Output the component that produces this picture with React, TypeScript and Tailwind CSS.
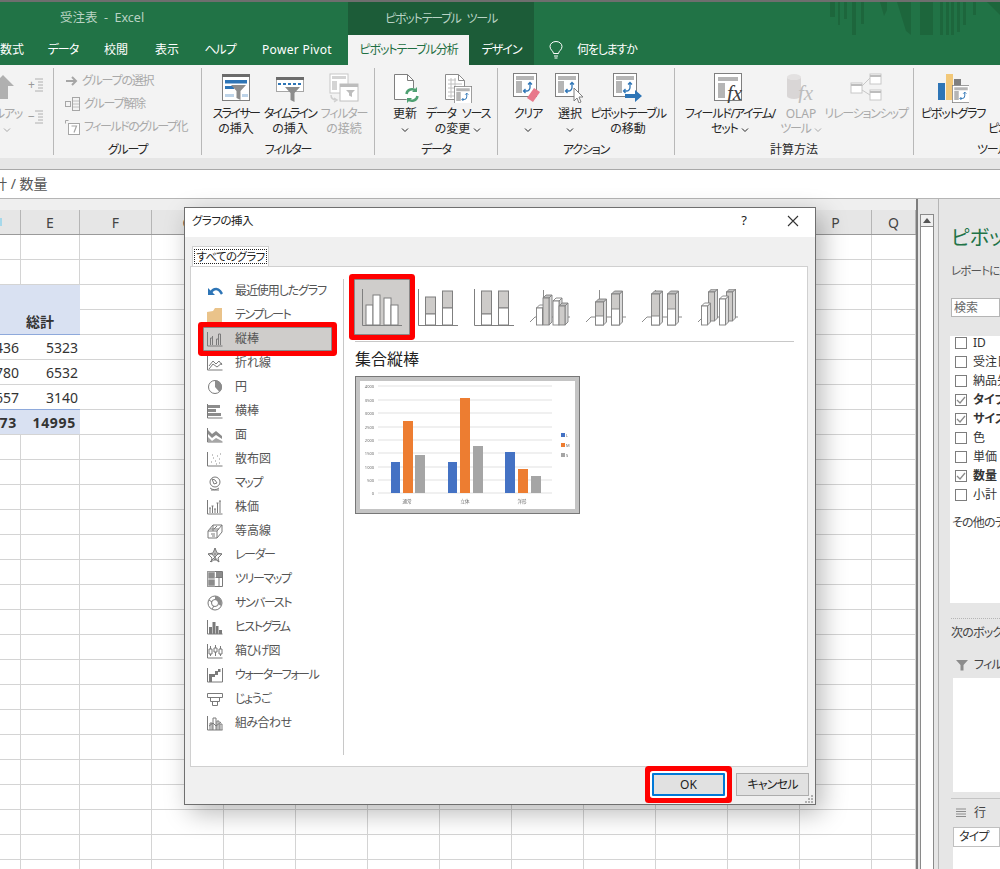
import type { ReactNode } from 'react';

const tabs = [
  { label: '数式', width: 'w-[37px] pl-0 text-left' },
  { label: 'データ', width: 'w-[52px] text-center tracking-[-1px]' },
  { label: '校閲', width: 'w-[54px] text-center' },
  { label: '表示', width: 'w-[48px] text-center' },
  { label: 'ヘルプ', width: 'w-[58px] text-center tracking-[-1px]' },
  { label: 'Power Pivot', width: 'w-[96px] text-center tracking-[0.3px]' },
];

const columns = ['', 'E', 'F', 'G', 'H', 'I', 'J', 'K', 'L', 'M', 'N', 'O', 'P', 'Q'];

function K({ children }: { children: ReactNode }) {
  return <span className="tracking-[-1.2px] [word-spacing:4px]">{children}</span>;
}

function PivotBase({ x = 0, y = 0, dim = false }: { x?: number; y?: number; dim?: boolean }) {
  const blue = dim ? '#b9b9b9' : '#2e75b6';
  return (
    <g transform={`translate(${x} ${y})`}>
      <rect x="0.5" y="0.5" width="23" height="23" fill="#fff" stroke={dim ? '#c4c4c4' : '#7f7f7f'} />
      <rect x="3" y="3" width="18" height="4" fill={dim ? '#d4d4d4' : '#b5b5b5'} />
      <rect x="3" y="8" width="6" height="12" fill={dim ? '#d4d4d4' : '#b5b5b5'} />
      <path d="M11 18h2.5a3.5 3.5 0 0 0 3.5-3.5V10M15 11.5l2-2 2 2M12.5 16l-2 2 2 2" fill="none" stroke={blue} strokeWidth="1.3" />
    </g>
  );
}

function SlicerIcon() {
  return (
    <svg width="30" height="30" viewBox="0 0 30 30">
      <rect x="1.5" y="1.5" width="27" height="26" fill="#fff" stroke="#7f7f7f" />
      <rect x="1" y="1" width="28" height="3" fill="#6b6b6b" />
      <rect x="4" y="7" width="22" height="3.5" fill="#2e75b6" />
      <rect x="4" y="13" width="9" height="3" fill="#2e75b6" />
      <rect x="4" y="21" width="9" height="3" fill="#bdd3e8" />
      <rect x="21" y="21" width="6" height="3" fill="#bdd3e8" />
      <path d="M10 12h15l-5.5 6v9l-4-2v-7z" fill="#8c8c8c" />
    </svg>
  );
}

function TimelineIcon() {
  return (
    <svg width="30" height="30" viewBox="0 0 30 30">
      <rect x="1.5" y="4.5" width="27" height="14" fill="#fff" stroke="#a6a6a6" />
      <rect x="1" y="4" width="28" height="3" fill="#6b6b6b" />
      <path d="M3 11h3M8 11h3M13 11h3M18 11h3M23 11h3" stroke="#2e75b6" strokeWidth="2" />
      <path d="M10 14h15l-5.5 6v9l-4-2v-7z" fill="#8c8c8c" />
    </svg>
  );
}

function FilterConnectIcon() {
  return (
    <svg width="30" height="30" viewBox="0 0 30 30">
      <rect x="1" y="1" width="18" height="19" fill="#fff" stroke="#c8c8c8" />
      <rect x="3" y="3" width="14" height="3" fill="#d4d4d4" />
      <rect x="3" y="8" width="5" height="9" fill="#d4d4d4" />
      <rect x="11" y="11" width="18" height="17" fill="#fff" stroke="#c0c0c0" />
      <rect x="11" y="11" width="18" height="3" fill="#bdbdbd" />
      <path d="M17 17h9l-3 3v4l-3-1.500v-2.500z" fill="#bdbdbd" />
      <path d="M2 22c0 4 2 5 6 5M5 25l3 2-3 2" fill="none" stroke="#cfcfcf" strokeWidth="1.500" />
    </svg>
  );
}

function RefreshIcon() {
  return (
    <svg width="30" height="30" viewBox="0 0 30 30">
      <path d="M4.500 1.500h13l6 6v19h-19z" fill="#fff" stroke="#7f7f7f" />
      <path d="M17.500 1.500v6h6" fill="none" stroke="#7f7f7f" />
      <circle cx="22" cy="22" r="7" fill="#fff" />
      <path d="M16.500 21a5.500 5.500 0 0 1 9.500-3M27.500 23a5.500 5.500 0 0 1-9.500 3" fill="none" stroke="#4ea072" strokeWidth="2.500" />
      <path d="M27 14v5h-5zM17 30v-5h5z" fill="#4ea072" />
    </svg>
  );
}

function DataSourceIcon() {
  return (
    <svg width="30" height="30" viewBox="0 0 30 30">
      <path d="M2.500 1.500h13l6 6v19h-19z" fill="#fff" stroke="#8c8c8c" />
      <path d="M15.500 1.500v6h6" fill="none" stroke="#8c8c8c" />
      <path d="M5 7h8M5 11h14M5 15h14M5 19h14M5 23h14M8 5v20M12 5v20" stroke="#c0c0c0" />
      <g transform="translate(11 13) scale(0.75)">
        <PivotBase />
      </g>
    </svg>
  );
}

function ClearIcon() {
  return (
    <svg width="30" height="30" viewBox="0 0 30 30">
      <PivotBase />
      <path d="M21 15l6 4-7 10-6-4z" fill="#e8788a" />
    </svg>
  );
}

function SelectIcon() {
  return (
    <svg width="30" height="30" viewBox="0 0 30 30">
      <PivotBase />
      <path d="M19 15v13l3-3 2 5 2-1-2-5h4z" fill="#fff" stroke="#7f7f7f" />
    </svg>
  );
}

function MoveIcon() {
  return (
    <svg width="30" height="30" viewBox="0 0 30 30">
      <PivotBase />
      <path d="M12 21h10v-4l7 6-7 6v-4H12z" fill="#2e75b6" />
    </svg>
  );
}

function FxIcon({ dim = false }: { dim?: boolean }) {
  return (
    <svg width="32" height="30" viewBox="0 0 32 30">
      {dim ? (
        <g fill="#d9d6d6">
          <ellipse cx="9" cy="4" rx="7" ry="3" fill="#e3e1e1" />
          <path d="M2 4v19a7 3 0 0 0 14 0V4a7 3 0 0 1-14 0z" />
        </g>
      ) : (
        <g>
          <rect x="0.500" y="0.500" width="27" height="27" fill="#fff" stroke="#7f7f7f" />
          <rect x="4" y="4" width="20" height="4" fill="#b5b5b5" />
          <rect x="4" y="10" width="7" height="15" fill="#b5b5b5" />
        </g>
      )}
      <text x="13" y="27" fontFamily="'Liberation Serif', serif" fontStyle="italic" fontSize="21" fill={dim ? '#bdbdbd' : '#404040'}>
        fx
      </text>
    </svg>
  );
}

function RelationIcon() {
  return (
    <svg width="32" height="30" viewBox="0 0 32 30" fill="#fff" stroke="#c8c8c8">
      <rect x="1" y="10" width="11" height="10" />
      <rect x="20" y="1" width="11" height="10" />
      <rect x="20" y="17" width="11" height="10" />
      <path d="M12 13l8-8M12 17l8 5" />
      <path d="M1 12h11M20 3h11M20 19h11" stroke="#bdbdbd" strokeWidth="2" />
    </svg>
  );
}

function PivotChartIcon() {
  return (
    <svg width="32" height="30" viewBox="0 0 32 30">
      <rect x="1" y="10" width="7" height="17" fill="#2e75b6" />
      <rect x="9" y="1" width="7" height="26" fill="#f2c879" />
      <rect x="17" y="6" width="7" height="8" fill="#7f7f7f" />
      <g transform="translate(15 12) scale(0.75)">
        <PivotBase />
      </g>
    </svg>
  );
}

function Chevron() {
  return (
    <svg className="inline-block" width="8" height="6" viewBox="0 0 8 6">
      <path d="M1 1.500l3 3 3-3" fill="none" stroke="currentColor" />
    </svg>
  );
}

function RibbonButton({
  icon,
  lines,
  width,
  dim = false,
}: {
  icon?: ReactNode;
  lines: ReactNode[];
  width: string;
  dim?: boolean;
}) {
  return (
    <div className={`flex shrink-0 flex-col items-center ${width} ${dim ? 'text-[#a9a9a9]' : 'text-[#262626]'}`}>
      <div className="flex h-[33px] items-start justify-center">{icon}</div>
      {lines.map((line, i) => (
        <div key={i} className="whitespace-nowrap text-[12px] leading-[15px]">
          {line}
        </div>
      ))}
    </div>
  );
}

function Group({
  label,
  width,
  pad,
  tight = false,
  children,
}: {
  label: string;
  width: string;
  pad?: string;
  tight?: boolean;
  children: ReactNode;
}) {
  return (
    <div className={`my-[3px] flex shrink-0 flex-col border-r border-[#b8b8b8] pt-[5px] ${width}`}>
      <div className={`flex flex-1 ${pad ?? ''}`}>{children}</div>
      <div className={`flex h-[10px] items-center justify-center whitespace-nowrap text-[12px] text-[#262626] ${tight ? 'tracking-[-1.2px]' : ''}`}>
        {label}
      </div>
    </div>
  );
}

function Ribbon() {
  return (
    <div className="flex h-[93px] shrink-0 overflow-hidden bg-[#f3f3f3]">
      <div className="my-[3px] flex w-[54px] shrink-0 flex-col overflow-hidden border-r border-[#b8b8b8] pt-[5px] text-[#a9a9a9]">
        <div className="relative flex flex-1">
          <div className="flex w-[26px] flex-col items-center">
            <svg className="-ml-[20px]" width="24" height="33" viewBox="0 0 24 33">
              <path d="M12 2l11 11h-6v13h-10v-13h-6z" fill="#b0b0b0" />
            </svg>
            <div className="-ml-[10px] whitespace-nowrap text-[12px] leading-[15px] tracking-[-1.200px]">ルアッ</div>
            <div className="-ml-[12px] leading-[15px]">
              <Chevron />
            </div>
          </div>
          <div className="ml-[2px] flex flex-col gap-[18px] pt-[5px]">
            <div className="flex items-center text-[12px] leading-[14px]">
              <span className="text-[#999]">+</span>
              <svg width="8" height="14" viewBox="0 0 8 14">
                <path d="M0 1h8M3 4h5M3 7h5M3 10h5M0 13h8" stroke="#b0b0b0" />
              </svg>
            </div>
            <div className="flex items-center text-[12px] leading-[14px]">
              <span className="text-[#999]">−</span>
              <svg width="8" height="14" viewBox="0 0 8 14">
                <path d="M0 1h8M3 4h5M3 7h5M3 10h5M0 13h8" stroke="#b0b0b0" />
              </svg>
            </div>
          </div>
        </div>
        <div className="h-[10px]" />
      </div>

      <Group label="グループ" width="w-[148px]" pad="pl-[11px]" tight>
        <div className="flex flex-col gap-[7px] text-[12px] leading-[16px] text-[#a9a9a9]">
          <div className="flex items-center gap-[3px]">
            <svg width="14" height="12" viewBox="0 0 14 12">
              <path d="M1 6h9M7 2l4 4-4 4" fill="none" stroke="#a6a6a6" strokeWidth="2" />
            </svg>
            <span className="whitespace-nowrap tracking-[-1.200px]">グループの選択</span>
          </div>
          <div className="flex items-center gap-[3px]">
            <svg width="16" height="14" viewBox="0 0 16 14">
              <rect x="0.500" y="4.500" width="5" height="5" fill="none" stroke="#a6a6a6" />
              <rect x="7.500" y="0.500" width="7" height="13" fill="none" stroke="#a6a6a6" />
              <path d="M8 4h6M8 7h6M8 10h6" stroke="#c0c0c0" />
            </svg>
            <span className="whitespace-nowrap tracking-[-1.200px]">グループ解除</span>
          </div>
          <div className="flex items-center gap-[3px]">
            <svg width="16" height="15" viewBox="0 0 16 15">
              <path d="M0.500 3.500v-3h3" fill="none" stroke="#a6a6a6" />
              <rect x="3.500" y="3.500" width="11" height="11" fill="#fff" stroke="#a6a6a6" />
              <path d="M6.500 6h5l-2.500 6.500" fill="none" stroke="#a6a6a6" strokeWidth="1.200" />
            </svg>
            <span className="whitespace-nowrap tracking-[-1.500px]">フィールドのグループ化</span>
          </div>
        </div>
      </Group>

      <Group label="フィルター" width="w-[173px]" pad="pl-[7px]" tight>
        <RibbonButton width="w-[54px]" icon={<SlicerIcon />} lines={[<span key="a" className="tracking-[-1.600px]">スライサー</span>, 'の挿入']} />
        <RibbonButton width="w-[54px]" icon={<TimelineIcon />} lines={[<span key="a" className="tracking-[-1.800px]">タイムライン</span>, 'の挿入']} />
        <RibbonButton width="w-[54px]" dim icon={<FilterConnectIcon />} lines={[<K key="a">フィルター</K>, 'の接続']} />
      </Group>

      <Group label="データ" width="w-[123px]" pad="pl-[10px]" tight>
        <RibbonButton width="w-[40px]" icon={<RefreshIcon />} lines={['更新', <Chevron key="c" />]} />
        <RibbonButton
          width="w-[66px]"
          icon={<DataSourceIcon />}
          lines={[
            <K key="a">データ ソース</K>,
            <span key="c">
              の変更 <Chevron />
            </span>,
          ]}
        />
      </Group>

      <Group label="アクション" width="w-[177px]" pad="pl-[10px]" tight>
        <RibbonButton width="w-[40px]" icon={<ClearIcon />} lines={[<K key="a">クリア</K>, <Chevron key="c" />]} />
        <RibbonButton width="w-[44px]" icon={<SelectIcon />} lines={['選択', <Chevron key="c" />]} />
        <RibbonButton width="w-[72px]" icon={<MoveIcon />} lines={[<K key="a">ピボットテーブル</K>, 'の移動']} />
      </Group>

      <Group label="計算方法" width="w-[239px]" pad="pl-[10px]">
        <RibbonButton
          width="w-[90px]"
          icon={<FxIcon />}
          lines={[
            <K key="a">フィールド/アイテム/</K>,
            <span key="c">
              <K>セット</K> <Chevron />
            </span>,
          ]}
        />
        <RibbonButton
          width="w-[52px]"
          dim
          icon={<FxIcon dim />}
          lines={[
            'OLAP',
            <span key="c">
              <K>ツール</K> <Chevron />
            </span>,
          ]}
        />
        <RibbonButton width="w-[78px]" dim icon={<RelationIcon />} lines={[<K key="a">リレーションシップ</K>]} />
      </Group>

      <div className="my-[3px] flex min-w-0 flex-1 flex-col overflow-hidden pt-[5px]">
        <div className="flex flex-1 pl-[4px]">
          <RibbonButton width="w-[70px]" icon={<PivotChartIcon />} lines={[<K key="a">ピボットグラフ</K>]} />
          <div className="whitespace-nowrap pt-[48px] text-[12px] leading-[15px] tracking-[-1.200px] text-[#262626]">ピボット</div>
        </div>
        <div className="h-[10px] whitespace-nowrap pl-[63px] text-[12px] leading-[10px] tracking-[-1.200px] text-[#262626]">ツール</div>
      </div>
    </div>
  );
}

function Sheet() {
  const rows = Array.from({ length: 26 }, (_, r) => r);
  const blueRows = [2, 3, 7];
  const cols = ['d', 'e', ...columns.slice(2)];
  const text: Record<string, string> = {
    'e3': '総計',
    'd4': '436',
    'e4': '5323',
    'd5': '780',
    'e5': '6532',
    'd6': '657',
    'e6': '3140',
    'd7': '73',
    'e7': '14995',
  };
  return (
    <div className="flex w-[918px] shrink-0 flex-col border-r-2 border-[#7d7d7d]">
      <div className="h-[11px] shrink-0 bg-[#efefef]" />
      <div className="grid h-[25px] shrink-0 grid-cols-[21px_59px_repeat(11,72px)_44px] border-b border-[#9a9a9a] bg-[#e6e6e6]">
        {columns.map((c, i) => (
          <div key={i} className="flex items-center justify-center border-r border-[#b5b5b5] text-[14px] text-[#444]">
            {i === 0 ? <div className="mr-auto h-[8px] w-[2px] bg-[#a6d8ea]" /> : c}
          </div>
        ))}
      </div>
      <div className="grid auto-rows-[25px] grid-cols-[21px_59px_repeat(11,72px)_44px] overflow-hidden bg-white">
        {rows.map((r) =>
          cols.map((c) => {
            const isPivot = c === 'd' || c === 'e';
            const blue = isPivot && blueRows.includes(r);
            const line = isPivot && (r === 3 || r === 6);
            const pivotRow = isPivot && r >= 2 && r <= 7;
            const value = text[`${c}${r}`];
            return (
              <div
                key={`${c}${r}`}
                className={`flex items-center justify-end overflow-hidden whitespace-nowrap text-[14px] text-[#333] ${
                  blue ? 'bg-[#d9e1f2]' : ''
                } ${line ? 'border-b border-[#8ea9db]' : r === 2 && isPivot ? '' : 'border-b border-[#d4d4d4]'} ${
                  pivotRow ? '' : 'border-r border-[#d4d4d4]'
                } ${r === 7 ? 'font-bold tracking-[0.7px]' : ''} ${r === 3 ? 'pb-[1px] pr-[26px] font-bold' : r === 7 ? 'pr-[4px]' : 'pr-[2px]'}`}
              >
                {value}
              </div>
            );
          }),
        )}
      </div>
    </div>
  );
}

const fieldRows = [
  { label: 'ID', on: false },
  { label: '受注日', on: false },
  { label: '納品先', on: false },
  { label: 'タイプ', on: true },
  { label: 'サイズ', on: true },
  { label: '色', on: false },
  { label: '単価', on: false },
  { label: '数量', on: true },
  { label: '小計', on: false },
];

function FieldPanel() {
  return (
    <div className="flex min-w-0 flex-1 overflow-hidden bg-[#e6e6e6]">
      <div className="flex w-[20px] shrink-0 flex-col pl-[2px] pt-[15px]">
        <div className="flex w-[14px] flex-1 flex-col border-x border-[#8a8a8a] bg-white">
          <div className="flex h-[13px] items-center justify-center border-y border-[#8a8a8a] bg-[#f0f0f0]">
            <svg width="8" height="5" viewBox="0 0 8 5">
              <path d="M4 0l4 5H0z" fill="#555" />
            </svg>
          </div>
        </div>
      </div>
      <div className="flex w-[62px] shrink-0 flex-col whitespace-nowrap border-l border-[#b5b5b5] pl-[12px]">
        <div className="mt-[25px] h-[27px] text-[20px] leading-[27px] text-[#217346]">ピボットテーブル</div>
        <div className="mt-[13px] h-[14px] text-[11.500px] leading-[14px] tracking-[-0.800px] text-[#555]">レポートに追加する</div>
        <div className="mt-[20px] h-[19px] border border-[#b5b5b5] bg-white pl-[2px] text-[12px] leading-[17px] text-[#666]">検索</div>
        <div className="mt-[19px] h-[267px] -ml-[1px] bg-white">
          <div className="-mt-[3px] pl-[5px]">
            {fieldRows.map((f) => (
              <div key={f.label} className="flex h-[19px] items-center gap-[6px]">
                <div className="flex h-[12px] w-[12px] shrink-0 items-center justify-center border border-[#7d7d7d] bg-white">
                  {f.on && (
                    <svg width="10" height="10" viewBox="0 0 10 10">
                      <path d="M1 5l3 3 5-6" fill="none" stroke="#8a8a8a" strokeWidth="1.300" />
                    </svg>
                  )}
                </div>
                <span className={`text-[12px] text-[#333] ${f.on ? 'font-bold' : ''}`}>{f.label}</span>
              </div>
            ))}
            <div className="-ml-[3px] mt-[10px] h-[18px] text-[12px] leading-[18px] tracking-[-0.800px] text-[#444]">その他のテーブル</div>
          </div>
        </div>
        <div className="mt-[15px] h-0 border-t border-dotted border-[#b5b5b5]" />
        <div className="mt-[5px] h-[18px] text-[12px] leading-[18px] tracking-[-0.800px] text-[#444]">次のボックス間</div>
        <div className="mt-[13px] flex h-[19px] items-center gap-[6px] pl-[5px] text-[12px] tracking-[-0.800px] text-[#444]">
          <svg width="12" height="12" viewBox="0 0 12 12" className="shrink-0">
            <path d="M0 1h12L7.500 6v5.500h-3V6z" fill="#8c8c8c" />
          </svg>
          フィルター
        </div>
        <div className="ml-[2px] mt-[4px] h-[114px] bg-white" />
        <div className="mt-[6px] border-t border-[#c4c4c4]" />
        <div className="mt-[6px] flex h-[16px] items-center gap-[8px] pl-[5px] text-[12px] text-[#444]">
          <svg width="10" height="10" viewBox="0 0 10 10" className="shrink-0">
            <path d="M0 1h10M0 3.500h10M0 6h10M0 8.500h10" stroke="#8c8c8c" />
          </svg>
          行
        </div>
        <div className="ml-[2px] mt-[6px] flex-1 bg-white">
          <div className="h-[20px] border border-[#c0c0c0] pl-[5px] text-[12px] leading-[18px] tracking-[-0.800px] text-[#333]">タイプ</div>
        </div>
      </div>
    </div>
  );
}

const ic = { fill: 'none', stroke: '#7a7a7a' };

const listItems: { label: string; track: string; icon: ReactNode }[] = [
  {
    label: '最近使用したグラフ',
    track: 'tracking-[-1.100px]',
    icon: (
      <>
        <path d="M4 11a5 5 0 0 1 9-3l2 3" fill="none" stroke="#2e75b6" strokeWidth="2.500" />
        <path d="M1 5v7h7z" fill="#2e75b6" />
      </>
    ),
  },
  {
    label: 'テンプレート',
    track: 'tracking-[-1.400px]',
    icon: <path d="M0 5l6-1 2-3h7v14H0z" fill="#eac38a" />,
  },
  {
    label: '縦棒',
    track: '',
    icon: <path d="M.5 1v14h15M3.500 14V7h2v7M5.500 14V5M9.500 14V8h2v6M11.500 14V3h2v11" {...ic} />,
  },
  {
    label: '折れ線',
    track: '',
    icon: <path d="M.5 1v14h15M2 11l4-5 3 3 3-3 3 4M2 14l4-5 4 3 5-4" {...ic} />,
  },
  {
    label: '円',
    track: '',
    icon: (
      <>
        <circle cx="8" cy="8" r="6.500" {...ic} />
        <path d="M8 8V1.500A6.500 6.500 0 0 1 12.500 13z" fill="#8c8c8c" />
      </>
    ),
  },
  {
    label: '横棒',
    track: '',
    icon: (
      <>
        <path d="M.5 1v14h15" {...ic} />
        <path d="M1 2h12v3H1zM1 6h8v3H1zM1 10h13v3H1z" fill="#8c8c8c" />
      </>
    ),
  },
  {
    label: '面',
    track: '',
    icon: (
      <>
        <path d="M.5 1v14h15" {...ic} />
        <path d="M1 3l4 4 4-3 6 5v3l-6-4-4 3-4-4z" fill="#8c8c8c" />
        <path d="M1 10l4 4 4-3 6 3v1H1z" fill="#a6a6a6" />
      </>
    ),
  },
  {
    label: '散布図',
    track: '',
    icon: (
      <>
        <path d="M.5 1v14h15" {...ic} />
        <path d="M4 11h1M6 7h1M8 10h1M10 5h1M12 8h1M13 3h1M5 4h1M9 13h1M12 12h1" stroke="#8c8c8c" />
      </>
    ),
  },
  {
    label: 'マップ',
    track: 'tracking-[-1.400px]',
    icon: (
      <>
        <circle cx="8" cy="7" r="5" {...ic} />
        <path d="M5 4l3 1 2 3-3 1zM3 13a7 7 0 0 0 9 0M4 15h8" {...ic} />
      </>
    ),
  },
  {
    label: '株価',
    track: '',
    icon: <path d="M.5 1v14h15M3 14V9M5.500 14V7M8 14V10M10.500 14V4M13 14V2M2 9h2M4.500 7h2M7 10h2M9.500 4h2M12 2h2" {...ic} />,
  },
  {
    label: '等高線',
    track: '',
    icon: <path d="M1 8l5-6h9v7l-5 6H1zM1 8h9v7M10 8l5-6M3 6h9M6 2v6M10 3l-3 3M4 11h4M5 13h3" {...ic} />,
  },
  {
    label: 'レーダー',
    track: 'tracking-[-1.400px]',
    icon: <path d="M8 1l2 5 5 1-4 4 1 4-4-3-4 3 1-4-4-4 5-1zM8 1v13M1 7l14 0M3 15l9-9M4 6l8 9" {...ic} />,
  },
  {
    label: 'ツリーマップ',
    track: 'tracking-[-1.400px]',
    icon: (
      <>
        <path d="M.5.5h15v15H.5z" {...ic} />
        <path d="M1 1h7v7H1zM1 8h7v7H1z" fill="#8c8c8c" stroke="#fff" strokeWidth=".5" />
        <path d="M9 1h6v5H9z" fill="#8c8c8c" />
        <path d="M8.500 6.500h7M12 6.500v9" {...ic} />
      </>
    ),
  },
  {
    label: 'サンバースト',
    track: 'tracking-[-1.400px]',
    icon: (
      <>
        <circle cx="8" cy="8" r="7" {...ic} />
        <circle cx="8" cy="8" r="3.500" fill="#fff" stroke="#7a7a7a" />
        <path d="M8 1a7 7 0 0 1 6 10l-3-2a3.500 3.500 0 0 0-3-4.500z" fill="#8c8c8c" />
        <path d="M2 5l3 2M5 14l2-3" {...ic} />
      </>
    ),
  },
  {
    label: 'ヒストグラム',
    track: 'tracking-[-1.400px]',
    icon: (
      <>
        <path d="M.5 1v14h15" {...ic} />
        <path d="M2 8h3v7H2zM5.500 3h3v12h-3zM9 7h2.500v8H9zM12 11h3v4h-3z" fill="#7a7a7a" />
      </>
    ),
  },
  {
    label: '箱ひげ図',
    track: 'tracking-[-0.600px]',
    icon: <path d="M.5 1v14h15M2 6h3v5H2zM3.500 3v3M3.500 11v2M7 5h3v4H7zM8.500 2v3M8.500 9v4M12 6h3v5h-3zM13.500 3v3M13.500 11v2" {...ic} />,
  },
  {
    label: 'ウォーターフォール',
    track: 'tracking-[-1.400px]',
    icon: (
      <>
        <path d="M.5 1v14h15M15.500 15V1" {...ic} />
        <path d="M2 7h3v8H2zM5 7h3v3H5zM8 4h3v4H8zM11 2h2.500v3H11z" fill="#7a7a7a" />
      </>
    ),
  },
  {
    label: 'じょうご',
    track: 'tracking-[-1px]',
    icon: <path d="M.5 2.500h15v4H.5zM3.500 6.500h9v4h-9zM5.500 10.500h5v4h-5z" {...ic} />,
  },
  {
    label: '組み合わせ',
    track: 'tracking-[-0.600px]',
    icon: (
      <>
        <path d="M.5 1v14h15M3 15V8h2v7M6 15V3h3v12M10 15V6h2v9M13 15V9h2v6" {...ic} />
        <path d="M2 11l4-3 3 3 5-4" {...ic} />
      </>
    ),
  },
];

function Bar3D({ x, top, mid, bottom, w, upper }: { x: number; top: number; mid?: number; bottom: number; w: number; upper: string }) {
  const d = 3;
  return (
    <g stroke="#7f7f7f" strokeWidth="0.9">
      <path d={`M${x + w} ${top}l${d} -${d}v${bottom - top}l-${d} ${d}z`} fill="#d9d9d9" />
      <path d={`M${x} ${top}l${d} -${d}h${w}l-${d} ${d}z`} fill={upper === '#fff' ? '#fff' : '#bfbfbf'} />
      <rect x={x} y={top} width={w} height={bottom - top} fill={upper} />
      {mid !== undefined && <rect x={x} y={mid} width={w} height={bottom - mid} fill="#fff" />}
    </g>
  );
}

function Floor() {
  return <path d="M13.500 1v26M0 33l5-5h35" fill="none" stroke="#7f7f7f" strokeWidth="0.9" />;
}

function Axis() {
  return <path d="M.5 0v36.500H40" fill="none" stroke="#7f7f7f" />;
}

function Stack({ x, top, mid }: { x: number; top: number; mid: number }) {
  return (
    <g stroke="#7f7f7f">
      <rect x={x} y={top} width="10" height={mid - top} fill="#cdcbc9" />
      <rect x={x} y={mid} width="10" height={36 - mid} fill="#fff" />
    </g>
  );
}

const G = '#cdcbc9';

const chartTypes: ReactNode[] = [
  <>
    <Axis />
    <Stack x={7.500} top={8} mid={25} />
    <Stack x={24.500} top={2} mid={19} />
  </>,
  <>
    <Axis />
    <Stack x={7.500} top={2} mid={25} />
    <Stack x={24.500} top={2} mid={19} />
  </>,
  <>
    <Floor />
    <Bar3D x={6.500} top={19} bottom={36} w={6} upper="#fff" />
    <Bar3D x={13} top={9} bottom={36} w={6} upper={G} />
    <Bar3D x={23} top={12} bottom={36} w={6} upper="#fff" />
    <Bar3D x={29} top={17} bottom={36} w={6} upper={G} />
  </>,
  <>
    <Floor />
    <Bar3D x={9.500} top={13} mid={27} bottom={36} w={8} upper={G} />
    <Bar3D x={25.500} top={5} mid={20} bottom={36} w={8} upper={G} />
  </>,
  <>
    <Floor />
    <Bar3D x={9.500} top={5} mid={27} bottom={36} w={8} upper={G} />
    <Bar3D x={25.500} top={5} mid={20} bottom={36} w={8} upper={G} />
  </>,
  <>
    <Floor />
    <Bar3D x={10.500} top={3} bottom={32} w={6} upper={G} />
    <Bar3D x={28.500} top={3} bottom={32} w={6} upper={G} />
    <Bar3D x={3.500} top={17} bottom={36} w={6} upper="#fff" />
    <Bar3D x={21.500} top={10} bottom={36} w={6} upper="#fff" />
  </>,
];

function ChartPreview() {
  const grid = [386, 400, 413, 427, 440, 453, 467, 480, 493];
  const yLabels = ['4000', '3500', '3000', '2500', '2000', '1500', '1000', '500', '0'];
  const bars = [
    { x: 391, w: 9, top: 462, fill: '#4472c4' },
    { x: 403, w: 10, top: 421, fill: '#ed7d31' },
    { x: 415, w: 10, top: 455, fill: '#a5a5a5' },
    { x: 448, w: 9, top: 462, fill: '#4472c4' },
    { x: 460, w: 10, top: 398, fill: '#ed7d31' },
    { x: 473, w: 10, top: 446, fill: '#a5a5a5' },
    { x: 505, w: 10, top: 452, fill: '#4472c4' },
    { x: 518, w: 10, top: 469, fill: '#ed7d31' },
    { x: 531, w: 10, top: 476, fill: '#a5a5a5' },
  ];
  return (
    <svg width="225" height="138" viewBox="355 376 225 138" className="ml-px blur-[0.25px]">
      <rect x="355.500" y="376.500" width="224" height="137" fill="#fff" stroke="#777" />
      <rect x="358" y="379" width="219" height="132" fill="none" stroke="#c4c4c4" strokeWidth="4" />
      {grid.map((y, i) => (
        <g key={y}>
          <path d={`M378 ${y}h174`} stroke="#d9d9d9" strokeWidth="0.8" />
          <text x="374" y={y + 1.500} textAnchor="end" fontSize="4" fill="#666">
            {yLabels[i]}
          </text>
        </g>
      ))}
      {bars.map((b) => (
        <rect key={b.x} x={b.x} y={b.top} width={b.w} height={493 - b.top} fill={b.fill} />
      ))}
      <g fontSize="4.500" fill="#666" textAnchor="middle">
        <text x="407" y="503">通常</text>
        <text x="465" y="503">立体</text>
        <text x="522" y="503">洋形</text>
      </g>
      <rect x="561" y="433" width="4" height="4" fill="#4472c4" />
      <rect x="561" y="443" width="4" height="4" fill="#ed7d31" />
      <rect x="561" y="453" width="4" height="4" fill="#a5a5a5" />
      <g fontSize="4" fill="#666">
        <text x="566" y="436.500">L</text>
        <text x="566" y="446.500">M</text>
        <text x="566" y="456.500">S</text>
      </g>
    </svg>
  );
}

function ChartDialog() {
  return (
    <div className="absolute left-[184px] top-[207px] flex h-[598px] w-[632px] flex-col border border-[#6f6f6f] bg-[#f0f0f0] shadow-[6px_8px_24px_rgba(0,0,0,0.28)]">
      <div className="flex h-[29px] shrink-0 items-center bg-white pb-[3px] pl-[7px] text-[11.500px] text-[#222]">
        <span className="tracking-[-0.500px]">グラフの挿入</span>
        <span className="ml-auto text-[13px]">?</span>
        <svg className="ml-[40px] mr-[16px]" width="12" height="12" viewBox="0 0 12 12">
          <path d="M1 1l10 10M11 1L1 11" stroke="#333" strokeWidth="1.100" />
        </svg>
      </div>
      <div className="ml-[7px] mt-[9px] flex h-[21px] w-[77px] shrink-0 items-center justify-center border border-b-0 border-[#d0d0d0] bg-white px-[1px]">
        <div className="mb-[1px] flex h-[15px] w-full items-center justify-center whitespace-nowrap border border-dotted border-[#222] text-[11.500px] tracking-[-0.600px] text-[#222]">
          すべてのグラフ
        </div>
      </div>
      <div className="-mt-px ml-[5px] flex h-[501px] w-[618px] shrink-0 border border-[#d0d0d0] bg-white">
        <div className="mb-[11px] mt-[12px] w-[153px] shrink-0 border-r border-[#c8c8c8]">
          {listItems.map((item) => {
            const active = item.label === '縦棒';
            return (
              <div
                key={item.label}
                className={`flex h-[24px] items-center text-[12px] text-[#555] ${
                  active
                    ? 'relative ml-[12px] w-[129px] rounded-[1px] border border-[#8a8a8a] bg-[#cfcdcb] pl-[3px] text-[#333] shadow-[0_0_0_5px_#f00]'
                    : 'pl-[16px]'
                }`}
              >
                <svg className="mr-[12px] shrink-0" width="16" height="16" viewBox="0 0 16 16">
                  {item.icon}
                </svg>
                <span className={`whitespace-nowrap ${item.track}`}>{item.label}</span>
              </div>
            );
          })}
        </div>
        <div className="flex min-w-0 flex-1 flex-col pl-[10px] pt-[12px]">
          <div className="flex h-[56px] items-center">
            <div className="flex h-[56px] w-[56px] shrink-0 items-center justify-center rounded-[1px] border border-[#8a8a8a] bg-[#cfcdcb] shadow-[0_0_0_5px_#f00]">
              <svg width="40" height="37" viewBox="0 0 40 37">
                <Axis />
                <g fill="#fff" stroke="#7f7f7f">
                  <rect x="4" y="16" width="7" height="20" />
                  <rect x="11" y="6" width="7" height="30" />
                  <rect x="22" y="9" width="7" height="27" />
                  <rect x="29" y="16" width="7" height="20" />
                </g>
              </svg>
            </div>
            <div className="ml-[8px] flex gap-[16px]">
              {chartTypes.map((c, i) => (
                <svg key={i} width="40" height="37" viewBox="0 0 40 37" className="mt-[1px]">
                  {c}
                </svg>
              ))}
            </div>
          </div>
          <div className="ml-px mt-[6px] w-[439px] border-t border-[#c8c8c8]" />
          <div className="ml-px flex h-[34px] items-center text-[16px] text-[#222]">集合縦棒</div>
          <ChartPreview />
        </div>
      </div>
      <div className="flex flex-1 items-start pl-[467px] pt-[6px]">
        <div className="flex h-[23px] w-[73px] items-center justify-center rounded-[1px] border-2 border-[#0078d7] bg-[#e1e1e1] text-[12px] text-[#222] shadow-[0_0_0_2px_#fff,0_0_0_7px_#f00]">
          OK
        </div>
        <div className="ml-[11px] flex h-[23px] w-[73px] items-center justify-center border border-[#adadad] bg-[#e1e1e1] text-[12px] tracking-[-0.800px] text-[#222]">
          キャンセル
        </div>
      </div>
      <svg className="absolute bottom-[1px] right-[1px]" width="9" height="9" viewBox="0 0 9 9">
        <path d="M6 1h2v2H6zM3 4h2v2H3zM6 4h2v2H6zM0 7h2v2H0zM3 7h2v2H3zM6 7h2v2H6z" fill="#b0b0b0" />
      </svg>
    </div>
  );
}

export default function App() {
  return (
    <div className="relative flex h-[869px] w-[1000px] flex-col overflow-hidden bg-white font-['Noto_Sans','Noto_Sans_CJK_JP',sans-serif] [font-feature-settings:'palt']">
      <div className="relative flex h-[35px] shrink-0 border-t-2 border-[#6e6e6e] bg-[#217346]">
        <div className="w-[348px] pl-[60px] pt-[7px] text-[12.500px] text-[#b9d3c4]">受注表&nbsp; -&nbsp; Excel</div>
        <div className="flex w-[186px] items-center justify-center bg-[#1c5c38] text-[12px] tracking-[-1.200px] text-[#b9d3c4] [word-spacing:4px]">ピボットテーブル ツール</div>
        <svg className="absolute right-0 top-0" width="180" height="38" viewBox="0 0 180 38">
          <path
            d="M10 0h5v15h-5zM18 0h2v23h-2zM24 0h3v17h-3zM32 0h4v33h-4zM41 0h3v22h-3zM60 0h7v8l-3 6zM77 0h14v33l-5-4zM100 0h13v38h-13zM120 0h3v33h-3zM126 0h3v33h-3zM131 0h3v33h-3zM137 0h3v30h-3zM143 0h3v23h-3zM153 0h3v13h-3zM167 0h13v13z"
            fill="#1c6139"
            fillOpacity="0.75"
          />
        </svg>
      </div>
      <div className="relative flex h-[30px] shrink-0 items-center bg-[#217346] text-[12px] text-white">
        {tabs.map((t) => (
          <div key={t.label} className={`${t.width} whitespace-nowrap`}>
            {t.label}
          </div>
        ))}
        <div className="ml-[3px] flex h-full w-[121px] items-center justify-center bg-[#f3f3f3] tracking-[-1.100px] text-[#1f6f43]">ピボットテーブル分析</div>
        <div className="flex h-full w-[65px] items-center justify-center bg-[#1c5c38] tracking-[-1px]">デザイン</div>
        <svg className="ml-[15px]" width="14" height="18" viewBox="0 0 14 18">
          <path d="M4.500 12.500c0-2.500-3.500-3.500-3.500-7a6 5 0 0 1 12 0c0 3.500-3.500 4.500-3.500 7zM5 15h4M5.500 17h3" fill="none" stroke="#fff" />
        </svg>
        <div className="ml-[14px] tracking-[-1.200px]">何をしますか</div>
      </div>
      <Ribbon />
      <div className="h-[12px] shrink-0 border-b border-[#a8a8a8] bg-[#e6e6e6]" />
      <div className="flex h-[29px] shrink-0 items-center overflow-hidden border-b border-[#b5b5b5] bg-white pb-[2px] text-[14px] text-[#555]">
        <span className="-ml-[7px] whitespace-pre">計 / 数量</span>
      </div>
      <div className="flex min-h-0 flex-1 overflow-hidden">
        <Sheet />
        <FieldPanel />
      </div>
      <ChartDialog />
    </div>
  );
}
